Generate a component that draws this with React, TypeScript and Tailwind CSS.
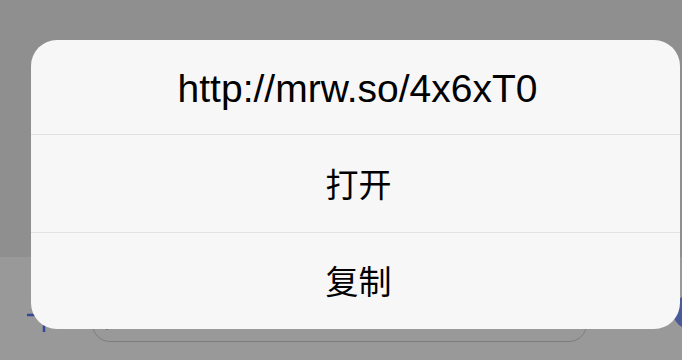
import React from "react";

export default function App() {
  return (
    <div className="relative w-[682px] h-[360px] overflow-hidden flex flex-col">
      <div className="flex-1 bg-[#8f8f8f]" />
      <div className="h-[103px] shrink-0 bg-[#999999] flex items-start pt-[39px] pl-[27px]">
        <svg width="34" height="34" viewBox="0 0 34 34" className="shrink-0 mt-[2px]">
          <path d="M17 0V34M0 17H34" stroke="#34489a" strokeWidth="2.5" fill="none" />
        </svg>
        <div className="shrink-0 ml-[31px] w-[495px] h-[46px] rounded-[18px] border-[1.5px] border-[#7d7d7d] relative">
          <div className="absolute left-[13px] top-[25px] w-[2px] h-[8px] bg-[#6f7a96]" />
        </div>
        <div className="shrink-0 ml-[86px] -mt-[1px] w-[34px] h-[34px] rounded-full bg-[#4a5a9a]" />
      </div>

      <div className="absolute left-[31px] top-[40px] w-[649px] h-[289px] rounded-[26px] bg-[#f7f7f7] flex flex-col overflow-hidden">
        <div
          className="h-[94px] shrink-0 flex items-center justify-center pt-[4px] pl-[4px] text-[39px] text-black"
          style={{ fontFamily: '"Liberation Sans", Arial, sans-serif' }}
        >
          http://mrw.so/4x6xT0
        </div>
        <div className="h-px shrink-0 bg-[#e2e2e2]" />
        <div
          className="h-[97px] shrink-0 flex items-center justify-center pl-[6px] text-[33px] text-black"
          style={{ fontFamily: '"Noto Sans CJK SC", "Noto Sans", sans-serif' }}
        >
          打开
        </div>
        <div className="h-px shrink-0 bg-[#e2e2e2]" />
        <div
          className="flex-1 flex items-center justify-center pl-[6px] text-[33px] text-black"
          style={{ fontFamily: '"Noto Sans CJK SC", "Noto Sans", sans-serif' }}
        >
          复制
        </div>
      </div>
    </div>
  );
}
